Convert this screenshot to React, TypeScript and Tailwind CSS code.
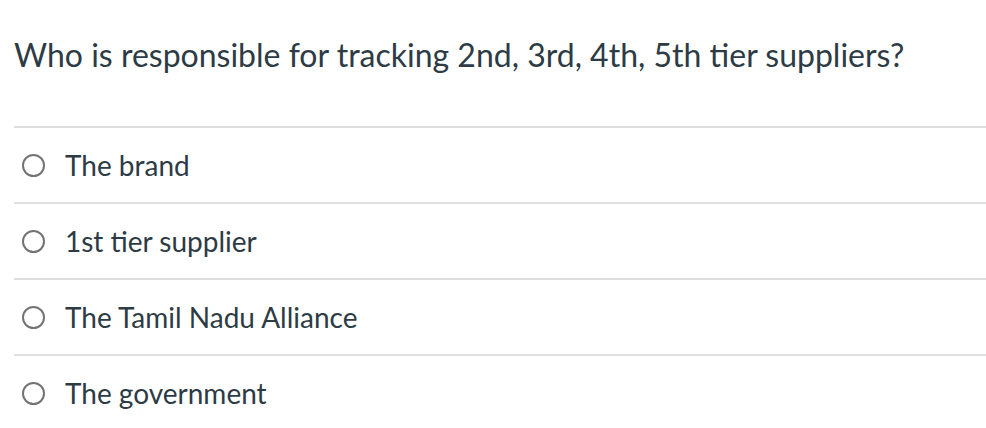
import React from "react";

const options = ["The brand", "1st tier supplier", "The Tamil Nadu Alliance", "The government"];

const App = () => {
  return (
    <div className="w-[986px] h-[428px] bg-white overflow-hidden font-['Lato',sans-serif] text-[#2d3b45]">
      <div className="pl-[14px]">
        <h1 className="pt-[33px] text-[32px] leading-[44px] font-normal">
          Who is responsible for tracking 2nd, 3rd, 4th, 5th tier suppliers?
        </h1>
        <div className="mt-[49px]">
          {options.map((opt) => (
            <div key={opt} className="flex h-[76px] items-center gap-[20px] border-t-2 border-[#dddfe1] pl-[8px]">
              <span className="h-[23px] w-[23px] rounded-full border-2 border-[#737373]" />
              <span className="text-[28px] leading-[34px]">{opt}</span>
            </div>
          ))}
        </div>
      </div>
    </div>
  );
};

export default App;
